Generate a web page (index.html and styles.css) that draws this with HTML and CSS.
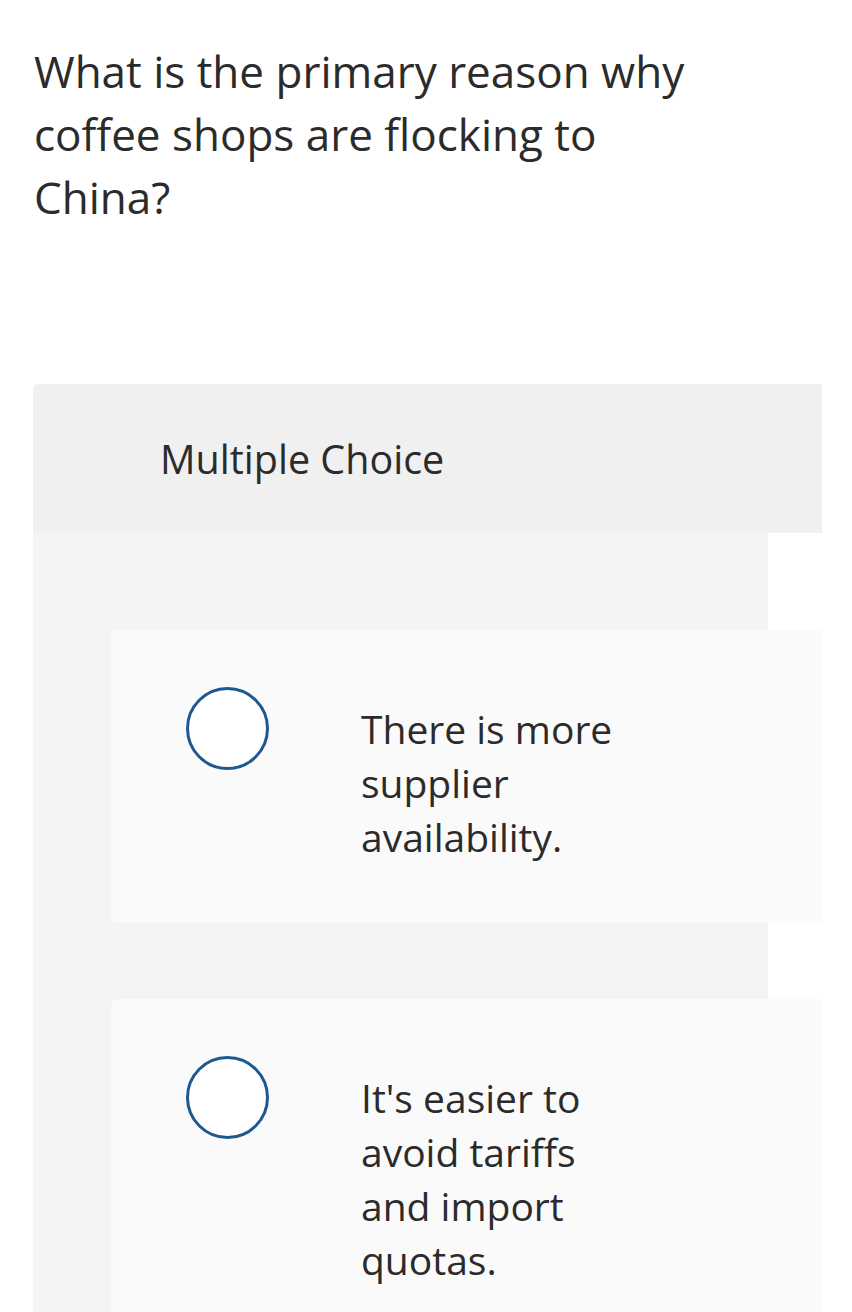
FILE: index.html
```html
<!DOCTYPE html>
<html lang="en">
<head>
<meta charset="utf-8">
<title>Question</title>
<link rel="stylesheet" href="styles.css">
</head>
<body>
<main class="page">
  <h1 class="question">What is the primary reason why coffee shops are flocking to China?</h1>
  <section class="quiz">
    <div class="quiz-header">Multiple Choice</div>
    <div class="quiz-body">
      <label class="option">
        <span class="radio"></span>
        <span class="option-text">There is more supplier availability.</span>
      </label>
      <label class="option">
        <span class="radio"></span>
        <span class="option-text">It's easier to avoid tariffs and import quotas.</span>
      </label>
    </div>
  </section>
</main>
</body>
</html>
```
FILE: styles.css
```css
html, body {
  margin: 0;
  padding: 0;
  background: #ffffff;
}
body {
  font-family: "Open Sans", Lato, "Liberation Sans", sans-serif;
  color: #2b2b2b;
  width: 852px;
  height: 1312px;
  overflow: hidden;
}
.page {
  padding: 40px 0 0 33px;
}
.question {
  margin: 0 0 155px 1px;
  width: 700px;
  font-size: 44px;
  font-weight: 400;
  line-height: 63px;
}
.quiz {
  width: 789px;
  height: 928px;
  overflow: hidden;
}
.quiz-header {
  background: #f0f0f0;
  border-radius: 5px 0 0 0;
  height: 149px;
  box-sizing: border-box;
  padding: 48px 0 0 127px;
  font-size: 39.5px;
  line-height: 54px;
}
.quiz-body {
  background: #f4f4f4;
  width: 735px;
  height: 779px;
  padding: 97px 0 0 78px;
  box-sizing: border-box;
  display: flex;
  flex-direction: column;
  gap: 76px;
}
.option {
  width: 711px;
  flex: none;
  background: #fafafa;
  border-radius: 6px 0 0 6px;
  box-sizing: border-box;
  padding: 57px 0 59px 75px;
  display: flex;
  align-items: flex-start;
  gap: 92px;
  min-height: 293px;
}
.radio {
  flex: none;
  width: 83px;
  height: 83px;
  box-sizing: border-box;
  border: 3px solid #1e5891;
  border-radius: 50%;
  background: #ffffff;
}
.option-text {
  margin-top: 15px;
  width: 266px;
  font-size: 39px;
  line-height: 54px;
}
```
